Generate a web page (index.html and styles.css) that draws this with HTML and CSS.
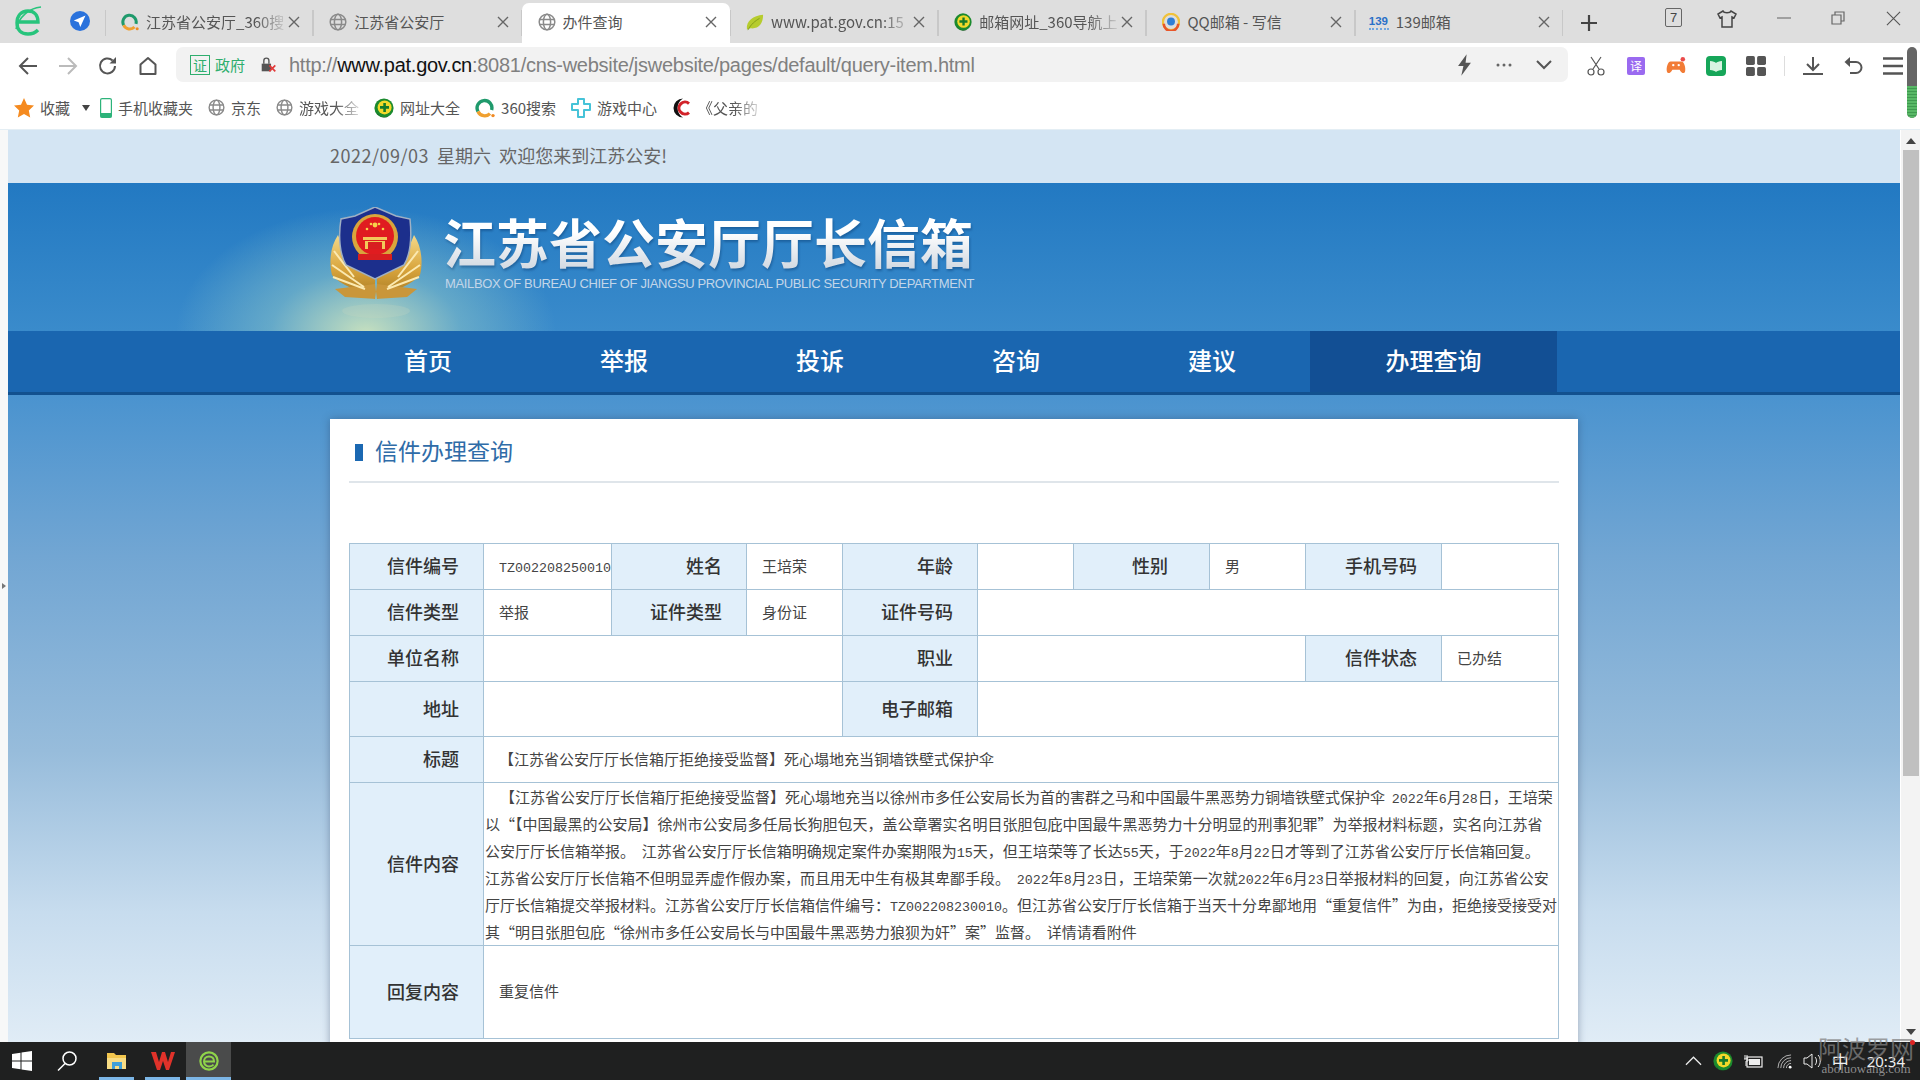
FILE: index.html
```html
<!DOCTYPE html>
<html lang="zh-CN">
<head>
<meta charset="utf-8">
<title>办件查询</title>
<link rel="stylesheet" href="styles.css">
</head>
<body>
<svg class="defs" width="0" height="0" aria-hidden="true">
  <defs>
    <symbol id="globe" viewBox="0 0 18 18"><g fill="none" stroke="#8a8a8a" stroke-width="1.5"><circle cx="9" cy="9" r="7.8"/><ellipse cx="9" cy="9" rx="3.6" ry="7.8"/><path d="M1.5 6.4h15M1.5 11.6h15"/></g></symbol>
    <symbol id="q360" viewBox="0 0 20 20"><path d="M3 13.5A7.4 7.4 0 1 1 16.6 12" fill="none" stroke="#1f9a6c" stroke-width="3.4"/><path d="M3 13.5A7.4 7.4 0 0 0 15 15.6" fill="none" stroke="#f0a030" stroke-width="3.4"/><circle cx="18" cy="17.6" r="1.7" fill="#f08a24"/></symbol>
    <symbol id="plus" viewBox="0 0 20 20"><circle cx="10" cy="10" r="9.6" fill="#1b8a2e"/><path d="M2 14A9.6 9.6 0 0 0 14 18.8 11 11 0 0 1 2 14Z" fill="#111"/><circle cx="10.6" cy="9.4" r="7" fill="#f2d92a"/><path d="M10.6 5v9M6 9.4h9" stroke="#167a2a" stroke-width="2.6"/></symbol>
    <symbol id="x" viewBox="0 0 12 12"><path d="M1 1l10 10M11 1L1 11" stroke="#666" stroke-width="1.4" fill="none"/></symbol>
  </defs>
</svg>

<header class="tabstrip">
  <div class="brand">
    <svg class="logo" viewBox="0 0 30 34"><path d="M4 17h20c0-7-4-11-10-11-7 0-11 5-11 12s4 11 11 11c5 0 8-2 10-4" fill="none" stroke="#27c47c" stroke-width="3.4"/><path d="M2 24C5 12 15 3 27 2" fill="none" stroke="#27c47c" stroke-width="1.6"/></svg>
    <svg class="send" viewBox="0 0 20 20"><circle cx="10" cy="10" r="10" fill="#2a72dc"/><path d="M15.5 4.5L3.8 9.6l4.8 1.6 1.7 4.9z" fill="#fff"/></svg>
  </div>
  <nav class="tabs">
    <div class="tab"><svg class="ico"><use href="#q360"/></svg><span class="tab-title fade">江苏省公安厅_360搜</span><svg class="tab-x"><use href="#x"/></svg></div>
    <div class="tab"><svg class="ico"><use href="#globe"/></svg><span class="tab-title">江苏省公安厅</span><svg class="tab-x"><use href="#x"/></svg></div>
    <div class="tab active"><svg class="ico"><use href="#globe"/></svg><span class="tab-title">办件查询</span><svg class="tab-x"><use href="#x"/></svg></div>
    <div class="tab"><svg class="ico" viewBox="0 0 20 20"><path d="M1 18C0 9 8 3 19 2c0 10-5 16-14 15z" fill="#b6cc2e"/><path d="M2 19C6 12 10 9 15 6" stroke="#7f9a18" fill="none"/></svg><span class="tab-title fade">www.pat.gov.cn:15</span><svg class="tab-x"><use href="#x"/></svg></div>
    <div class="tab"><svg class="ico"><use href="#plus"/></svg><span class="tab-title fade">邮箱网址_360导航上</span><svg class="tab-x"><use href="#x"/></svg></div>
    <div class="tab"><svg class="ico" viewBox="0 0 20 20"><circle cx="10" cy="10" r="9" fill="none" stroke="#f0c23a" stroke-width="2.6"/><path d="M2 12a8 8 0 0 0 16 0" fill="none" stroke="#e8562a" stroke-width="2.8"/><circle cx="10" cy="9.5" r="4.4" fill="#2f7fd6"/></svg><span class="tab-title">QQ邮箱 - 写信</span><svg class="tab-x"><use href="#x"/></svg></div>
    <div class="tab"><span class="ico-139">139</span><span class="tab-title">139邮箱</span><svg class="tab-x"><use href="#x"/></svg></div>
  </nav>
  <svg class="newtab" viewBox="0 0 16 16"><path d="M8 0v16M0 8h16" stroke="#444" stroke-width="2.2"/></svg>
  <div class="winctl">
    <span class="count">7</span>
    <svg class="wc shirt" viewBox="0 0 20 18"><path d="M6 1L1 4l2 4 2-1v10h10V7l2 1 2-4-5-3c-1 2.400-7 2.400-8 0z" fill="none" stroke="#444" stroke-width="1.5"/></svg>
    <svg class="wc min" viewBox="0 0 14 14"><path d="M0 7h14" stroke="#777" stroke-width="1.2"/></svg>
    <svg class="wc rest" viewBox="0 0 14 14"><path d="M1 4h9v9H1zM4 4V1h9v9h-3" fill="none" stroke="#666" stroke-width="1.2"/></svg>
    <svg class="wc cls" viewBox="0 0 16 16"><path d="M1 1l14 14M15 1L1 15" stroke="#555" stroke-width="1.2"/></svg>
  </div>
</header>

<div class="toolbar">
  <div class="tbtn"><svg viewBox="0 0 20 20"><path d="M19 10H2M10 2l-8 8 8 8" fill="none" stroke="#555" stroke-width="2"/></svg></div>
  <div class="tbtn"><svg viewBox="0 0 20 20"><path d="M1 10h17M10 2l8 8-8 8" fill="none" stroke="#bbb" stroke-width="2"/></svg></div>
  <div class="tbtn"><svg viewBox="0 0 20 20"><path d="M17 10a7.500 7.500 0 1 1-2.400-5.600" fill="none" stroke="#555" stroke-width="2"/><path d="M18 1v6.500h-6.500z" fill="#555"/></svg></div>
  <div class="tbtn"><svg viewBox="0 0 20 20"><path d="M2.500 18V8.500L10 2l7.500 6.500V18z" fill="none" stroke="#555" stroke-width="2" stroke-linejoin="round"/></svg></div>
  <div class="addr">
    <span class="cert">证</span><span class="gov">政府</span>
    <svg class="lock" viewBox="0 0 20 20"><path d="M2 9h11v9H2z" fill="#555"/><path d="M4.500 9V5.500a3 3 0 0 1 6 0V9" fill="none" stroke="#555" stroke-width="1.600"/><path d="M11 11l7 7M18 11l-7 7" stroke="#e23b3b" stroke-width="2"/></svg>
    <span class="url">http://<b>www.pat.gov.cn</b>:8081/cns-website/jswebsite/pages/default/query-item.html</span>
    <div class="addr-tools">
      <div class="abtn"><svg class="bolt" viewBox="0 0 14 20"><path d="M9 0L1 11h5l-2 9 9-12H8z" fill="#555"/></svg></div>
      <div class="abtn"><svg viewBox="0 0 16 4"><circle cx="2" cy="2" r="1.500" fill="#666"/><circle cx="8" cy="2" r="1.500" fill="#666"/><circle cx="14" cy="2" r="1.500" fill="#666"/></svg></div>
      <div class="abtn"><svg viewBox="0 0 16 10"><path d="M1 1l7 7 7-7" fill="none" stroke="#555" stroke-width="2"/></svg></div>
    </div>
  </div>
  <div class="tools">
    <div class="tbtn"><svg viewBox="0 0 20 20"><path d="M5 1l8 12M15 1L7 13" stroke="#555" stroke-width="1.200" fill="none"/><circle cx="5" cy="16" r="3" fill="none" stroke="#555" stroke-width="1.200"/><circle cx="15" cy="16" r="3" fill="none" stroke="#555" stroke-width="1.200"/></svg></div>
    <div class="tbtn"><span class="trans">译</span></div>
    <div class="tbtn"><svg viewBox="0 0 22 20"><path d="M5 5h12c3 0 5 7 4 11-1 3-4 2-6-2H7c-2 4-5 5-6 2C0 12 2 5 5 5z" fill="#f27c36"/><circle cx="8" cy="9" r="1.300" fill="#fff"/><circle cx="14" cy="9" r="1.300" fill="#fff"/><circle cx="18.500" cy="2.500" r="2.500" fill="#ea4a4a"/></svg></div>
    <div class="tbtn"><svg viewBox="0 0 20 20"><rect width="20" height="20" rx="4" fill="#16a659"/><path d="M4 5c3 0 5 1 6 2 1-1 3-2 6-2v9c-3 0-5 1-6 2-1-1-3-2-6-2z" fill="#d8f3e1"/></svg></div>
    <div class="tbtn"><svg viewBox="0 0 18 18"><rect width="8" height="8" rx="1.500" fill="#555"/><rect x="10" width="8" height="8" rx="1.500" fill="#555"/><rect y="10" width="8" height="8" rx="1.500" fill="#555"/><rect x="10" y="10" width="8" height="8" rx="1.500" fill="#555"/></svg></div>
    <i class="tool-sep"></i>
    <div class="tbtn"><svg viewBox="0 0 20 20"><path d="M10 1v12M4 8l6 6 6-6M0 18h20" fill="none" stroke="#555" stroke-width="2"/></svg></div>
    <div class="tbtn"><svg viewBox="0 0 20 20"><path d="M3 6h10a5 5 0 0 1 0 11H7" fill="none" stroke="#555" stroke-width="2"/><path d="M7 1L1.500 6 7 11z" fill="#555"/></svg></div>
    <div class="tbtn"><svg viewBox="0 0 16 16"><path d="M0 2h16M0 8h16M0 14h16" stroke="#555" stroke-width="2"/></svg></div>
  </div>
</div>

<div class="bookmarks">
  <div class="bm"><svg class="ico-b" viewBox="0 0 20 20"><path d="M10 0l3 6.800 7 .8-5.200 4.800 1.400 7.200L10 16l-6.200 3.600 1.400-7.200L0 7.600l7-.8z" fill="#f58a1f"/></svg><span>收藏</span></div>
  <span class="caret"></span>
  <div class="bm"><svg class="ico-p" viewBox="0 0 12 20"><rect x=".6" y=".6" width="10.800" height="18.800" rx="1.500" fill="#fff" stroke="#2db37a" stroke-width="1.200"/><rect x=".6" y="15" width="10.800" height="4.400" fill="#2db37a"/></svg><span>手机收藏夹</span></div>
  <div class="bm"><svg class="ico-g"><use href="#globe"/></svg><span>京东</span></div>
  <div class="bm"><svg class="ico-g"><use href="#globe"/></svg><span class="fade-b">游戏大全</span></div>
  <div class="bm"><svg class="ico-b"><use href="#plus"/></svg><span>网址大全</span></div>
  <div class="bm"><svg class="ico-b"><use href="#q360"/></svg><span>360搜索</span></div>
  <div class="bm"><svg class="ico-b" viewBox="0 0 20 20"><path d="M7 1h6v5h6v6h-6v7H7v-7H1V6h6z" fill="none" stroke="#46c3d8" stroke-width="2" stroke-linejoin="round"/></svg><span>游戏中心</span></div>
  <div class="bm"><svg class="ico-b" viewBox="0 0 20 20"><path d="M11 .5a9.500 9.500 0 1 0 0 19 11 11 0 0 1 0-19z" fill="#111"/><path d="M17 5.500a6 6 0 1 0 0 9" fill="none" stroke="#d2232a" stroke-width="3"/></svg><span class="fade-b">《父亲的</span></div>
  <div class="pill"><i></i></div>
</div>

<div class="viewport">
  <div class="gutter"><i></i></div>
  <main class="page">
    <div class="topline"><span class="date">2022/09/03</span><span>&nbsp;&nbsp;星期六&nbsp;&nbsp;欢迎您来到江苏公安!</span></div>
    <section class="banner">
      <svg class="emblem" viewBox="0 0 92 114">
        <defs>
          <linearGradient id="gold" x1="0" y1="0" x2="0" y2="1"><stop offset="0" stop-color="#f4d98a"/><stop offset=".55" stop-color="#d9a53c"/><stop offset="1" stop-color="#a87a24"/></linearGradient>
        </defs>
        <ellipse cx="46" cy="104" rx="34" ry="7" fill="#c9d9c0" opacity=".25"/>
        <path d="M8 28C0 40-1 56 2 68c8 10 26 16 43 22V62C28 60 14 46 8 28z" fill="url(#gold)"/>
        <path d="M84 28c8 12 9 28 6 40-8 10-26 16-43 22V62c17-2 31-16 37-34z" fill="url(#gold)"/>
        <path d="M5 82l40-5 2 15-32-2zM87 82l-40-5-2 15 32-2z" fill="#c9963a"/>
        <path d="M2 58l32 22M90 58L58 80M4 44l20 26M88 44L68 70M3 70l32 12M89 70L57 82" stroke="#fbe9b0" stroke-width="2" fill="none"/>
        <path d="M45 0l21 9 14 3c2 20 0 36-6 46L45 72 16 58C10 48 8 30 11 12l14-3z" fill="#1c2f8c" stroke="#9fb0c4" stroke-width="1.500"/>
        <circle cx="45" cy="30" r="23" fill="#d9a53c"/>
        <circle cx="45" cy="29" r="19" fill="#e01c20"/>
        <path d="M33 30h24v3H33zM35 34h20v8H35z" fill="#f2c95a"/>
        <path d="M38 35h14v7H38zM28 47h34v6H28z" fill="#d81e20"/>
        <circle cx="45" cy="18" r="2.400" fill="#f7d24a"/><circle cx="37" cy="22" r="1.300" fill="#f7d24a"/><circle cx="41" cy="17" r="1.300" fill="#f7d24a"/><circle cx="49" cy="17" r="1.300" fill="#f7d24a"/><circle cx="53" cy="22" r="1.300" fill="#f7d24a"/>
      </svg>
      <div class="banner-text">
        <h1>江苏省公安厅厅长信箱</h1>
        <p>MAILBOX OF BUREAU CHIEF OF JIANGSU PROVINCIAL PUBLIC SECURITY DEPARTMENT</p>
      </div>
    </section>
    <nav class="mainnav">
      <a>首页</a><a>举报</a><a>投诉</a><a>咨询</a><a>建议</a><a class="on">办理查询</a>
    </nav>
    <div class="wrap">
      <article class="card">
        <h2 class="card-title">信件办理查询</h2>
        <table class="info">
          <colgroup><col class="c1"><col class="c2"><col class="c3"><col class="c4"><col class="c5"><col class="c6"><col class="c7"><col class="c8"><col class="c9"><col class="c10"></colgroup>
          <tr class="r46"><th>信件编号</th><td class="tight-id"><span class="n">TZ002208250010</span></td><th>姓名</th><td>王培荣</td><th>年龄</th><td></td><th class="far">性别</th><td>男</td><th>手机号码</th><td></td></tr>
          <tr class="r46"><th>信件类型</th><td>举报</td><th>证件类型</th><td>身份证</td><th>证件号码</th><td colspan="5"></td></tr>
          <tr class="r46"><th>单位名称</th><td colspan="3"></td><th>职业</th><td colspan="3"></td><th>信件状态</th><td>已办结</td></tr>
          <tr class="r55"><th>地址</th><td colspan="3"></td><th>电子邮箱</th><td colspan="5"></td></tr>
          <tr class="r46"><th>标题</th><td colspan="9">【江苏省公安厅厅长信箱厅拒绝接受监督】死心塌地充当铜墙铁壁式保护伞</td></tr>
          <tr class="r163"><th>信件内容</th><td colspan="9" class="letter"><span class="first">【江苏省公安厅厅长信箱厅拒绝接受监督】死心塌地充当以徐州市多任公安局长为首的害群之马和中国最牛黑恶势力铜墙铁壁式保护伞&nbsp;&nbsp;<span class="n">2022</span>年<span class="n">6</span>月<span class="n">28</span>日，王培荣</span><br>以“【中国最黑的公安局】徐州市公安局多任局长狗胆包天，盖公章署实名明目张胆包庇中国最牛黑恶势力十分明显的刑事犯罪”为举报材料标题，实名向江苏省<br>公安厅厅长信箱举报。&nbsp;&nbsp;江苏省公安厅厅长信箱明确规定案件办案期限为<span class="n">15</span>天，但王培荣等了长达<span class="n">55</span>天，于<span class="n">2022</span>年<span class="n">8</span>月<span class="n">22</span>日才等到了江苏省公安厅厅长信箱回复。<br>江苏省公安厅厅长信箱不但明显弄虚作假办案，而且用无中生有极其卑鄙手段。&nbsp;&nbsp;<span class="n">2022</span>年<span class="n">8</span>月<span class="n">23</span>日，王培荣第一次就<span class="n">2022</span>年<span class="n">6</span>月<span class="n">23</span>日举报材料的回复，向江苏省公安<br>厅厅长信箱提交举报材料。江苏省公安厅厅长信箱信件编号：<span class="n">TZ002208230010</span>。但江苏省公安厅厅长信箱于当天十分卑鄙地用“重复信件”为由，拒绝接受接受对<br>其“明目张胆包庇“徐州市多任公安局长与中国最牛黑恶势力狼狈为奸”案”监督。&nbsp;&nbsp;详情请看附件</td></tr>
          <tr class="r93"><th>回复内容</th><td colspan="9">重复信件</td></tr>
        </table>
      </article>
    </div>
  </main>
  <aside class="scrollbar"><i class="up"></i><div class="thumb-track"><div class="thumb"></div></div><i class="down"></i></aside>
</div>

<footer class="taskbar">
  <div class="tb win"><svg viewBox="0 0 20 20"><path d="M0 3l8.500-1.200V9.500H0zM9.500 1.600L20 0v9.500H9.500zM0 10.500h8.500v7.700L0 17zM9.500 10.500H20V20L9.500 18.400z" fill="#fff"/></svg></div>
  <div class="tb search"><svg viewBox="0 0 20 20"><circle cx="12.500" cy="7.500" r="6.500" fill="none" stroke="#fff" stroke-width="1.500"/><path d="M8 12.500L1 19.500" stroke="#fff" stroke-width="1.500"/></svg></div>
  <div class="tb app folder"><svg viewBox="0 0 20 20"><path d="M0 2h7l2 2h10v14H0z" fill="#f2c64e"/><path d="M0 7h19v11H0z" fill="#f8dc84"/><path d="M5 11h10v7h-3v-3H8v3H5z" fill="#3f9fd8"/></svg></div>
  <div class="tb app wps"><svg viewBox="0 0 24 20"><path d="M0 1h5l3 10 3-10h3l3 10 3-10h4l-6 18h-3l-3-9-3 9H6z" fill="#e0322a"/></svg></div>
  <div class="tb app cur"><svg viewBox="0 0 22 22"><circle cx="11" cy="11" r="9.500" fill="none" stroke="#8fd44a" stroke-width="2.400"/><path d="M5.500 11.500h11c0-3.500-2-5.500-5.500-5.500s-5.500 2.500-5.500 5.500 2.500 5.500 5.500 5.500c2.500 0 4-1 5-2" fill="none" stroke="#8fd44a" stroke-width="2.200"/></svg></div>
  <div class="tray">
    <svg class="t-chev" viewBox="0 0 18 10"><path d="M1 9l8-8 8 8" fill="none" stroke="#eee" stroke-width="1.300"/></svg>
    <svg class="t-360"><use href="#plus"/></svg>
    <svg class="t-bat" viewBox="0 0 20 14"><rect x="4" y="3" width="15" height="10" fill="none" stroke="#eee" stroke-width="1.200"/><rect x="6" y="5" width="11" height="6" fill="#eee"/><path d="M2 1v4M4 1v4M1 5h4v2H3v5" stroke="#eee" fill="none"/></svg>
    <svg class="t-wifi" viewBox="0 0 16 16"><path d="M1 15A14 14 0 0 1 15 1M4 15A11 11 0 0 1 15 4M7 15a8 8 0 0 1 8-8M10 15a5 5 0 0 1 5-5" fill="none" stroke="#bbb"/><circle cx="14" cy="14" r="1.500" fill="#fff"/></svg>
    <svg class="t-vol" viewBox="0 0 20 16"><path d="M1 5h3l5-4v14l-5-4H1z" fill="none" stroke="#eee"/><path d="M12 4c2 2 2 6 0 8M15 2c3 3 3 9 0 12" fill="none" stroke="#eee"/></svg>
    <span class="t-ime">中</span>
    <span class="t-time">20:34</span>
  </div>
  <div class="watermark"><span class="wm-cn">阿波罗网</span><span class="wm-en">aboluowang.com</span><i></i></div>
</footer>
</body>
</html>
```
FILE: styles.css
```css
* { box-sizing: border-box; }
html, body { margin: 0; height: 100%; }
body {
  width: 1920px; height: 1080px; overflow: hidden;
  display: flex; flex-direction: column;
  font-family: "Noto Sans CJK SC", "Noto Sans", sans-serif;
  background: #fff; color: #333;
}
.defs { display: block; height: 0; }

/* tab strip */
.tabstrip { height: 43px; flex: none; background: #dedede; display: flex; align-items: flex-end; }
.brand { width: 105px; height: 43px; flex: none; display: flex; align-items: center; padding-left: 14px; }
.logo { width: 30px; height: 34px; flex: none; }
.send { width: 20px; height: 20px; margin-left: 26px; margin-bottom: 2px; flex: none; }
.tabs { display: flex; height: 40px; flex: none; }
.tab {
  width: 208.3px; height: 40px; flex: none; display: flex; align-items: center;
  padding: 0 13px 2px 16px; font-size: 15px; color: #555;
  background: linear-gradient(#c8c8c8, #c8c8c8) right 7px / 1px 26px no-repeat, linear-gradient(#c8c8c8, #c8c8c8) left 7px / 1px 26px no-repeat;
}
.tab.active { background: #fff; border-radius: 7px 7px 0 0; }
.ico { width: 18px; height: 18px; flex: none; }
.ico-139 { width: 20px; flex: none; margin-left: -2px; font: 700 11.5px/14px "Liberation Sans", sans-serif; color: #2a70c8; border-bottom: 2px dotted #6fa6e0; }
.tab-title { flex: 1; margin-left: 7px; white-space: nowrap; overflow: hidden; min-width: 0; line-height: 22px; }
.fade { flex: none; width: 140px; -webkit-mask-image: linear-gradient(90deg, #000 78%, rgba(0,0,0,.1)); mask-image: linear-gradient(90deg, #000 78%, rgba(0,0,0,.1)); }
.tab-x { width: 12px; height: 12px; flex: none; margin-left: auto; }
.newtab { width: 16px; height: 16px; margin: 0 0 12px 18px; flex: none; }
.winctl { display: flex; align-items: center; height: 43px; margin-left: 68px; flex: none; }
.count { width: 17px; height: 19px; border: 1px solid #666; border-radius: 2px; font: 13px/17px "Liberation Sans", sans-serif; text-align: center; color: #444; margin-top: -8px; }
.wc { flex: none; margin-top: -7px; }
.shirt { width: 20px; height: 18px; margin-left: 35px; margin-top: -5px; }
.min { width: 14px; height: 14px; margin-left: 40px; }
.rest { width: 14px; height: 14px; margin-left: 40px; }
.cls { width: 15px; height: 15px; margin-left: 41px; }

/* toolbar */
.toolbar { height: 45px; flex: none; display: flex; align-items: center; padding-left: 8px; background: #fff; }
.tbtn { width: 40px; height: 40px; flex: none; display: flex; align-items: center; justify-content: center; }
.tbtn svg { width: 20px; height: 20px; }
.addr {
  width: 1392px; height: 35px; margin: -2px 0 0 8px; flex: none; display: flex; align-items: center;
  padding-left: 14px; background: #f2f2f2; border-radius: 7px;
}
.cert { width: 20px; height: 20px; border: 1px solid #2fae6e; color: #2fae6e; font-size: 14px; line-height: 18px; text-align: center; flex: none; }
.gov { margin-left: 5px; font-size: 15px; color: #2fae6e; flex: none; }
.lock { width: 17px; height: 17px; margin-left: 15px; flex: none; }
.url { margin-left: 12px; font: 20px/26px "Liberation Sans", sans-serif; color: #808080; white-space: nowrap; letter-spacing: -.27px; }
.url b { font-weight: 400; color: #111; }
.addr-tools { margin-left: auto; display: flex; padding-right: 4px; }
.abtn { width: 40px; height: 30px; display: flex; align-items: center; justify-content: center; }
.abtn svg { width: 16px; height: 16px; }
.abtn svg.bolt { width: 15px; height: 22px; }
.tools { display: flex; align-items: center; margin-left: 8px; flex: none; }
.tool-sep { width: 1px; height: 20px; background: #ddd; margin: 0 8px; flex: none; }
.trans { width: 18px; height: 18px; background: #9a6af0; color: #fff; font-size: 12px; line-height: 18px; text-align: center; border-radius: 2px; }

/* bookmarks */
.bookmarks { height: 42px; flex: none; position: relative; display: flex; align-items: center; gap: 15px; padding: 0 0 2px 14px; font-size: 15px; color: #555; border-bottom: 1px solid #e4eef4; }
.bm { display: flex; align-items: center; gap: 6px; }
.bm span { white-space: nowrap; line-height: 20px; }
.ico-b { width: 20px; height: 20px; flex: none; }
.ico-g { width: 17px; height: 17px; flex: none; }
.ico-p { width: 12px; height: 20px; flex: none; }
.caret { width: 0; height: 0; border: 4px solid transparent; border-top: 6px solid #444; border-bottom: 0; margin-left: -3px; margin-right: -5px; }
.fade-b { -webkit-mask-image: linear-gradient(90deg, #000 60%, rgba(0,0,0,.25)); mask-image: linear-gradient(90deg, #000 60%, rgba(0,0,0,.25)); }
.pill { position: absolute; right: 3px; top: -41px; width: 10px; height: 71px; background: #666; border-radius: 5px; overflow: hidden; display: flex; align-items: flex-end; }
.pill i { display: block; width: 100%; height: 32px; background: repeating-linear-gradient(#58b866 0 2px, #3f9a50 2px 3px); }

/* viewport */
.viewport { flex: 1; min-height: 0; display: flex; overflow: hidden; }
.gutter { width: 8px; flex: none; background: #f7f8f8; display: flex; align-items: center; padding-left: 2px; }
.gutter i { display: block; border: 3px solid transparent; border-left: 4px solid #777; border-right: 0; }
.page { flex: 1; min-width: 0; display: flex; flex-direction: column; overflow: hidden; }
.topline { height: 53px; flex: none; background: #d4e5f3; padding: 0 0 3px 322px; display: flex; align-items: center; font-size: 18px; color: #666; white-space: nowrap; }
.date { letter-spacing: .5px; }
.banner {
  height: 148px; flex: none; padding: 24px 0 0 322px; display: flex; align-items: flex-start;
  background:
    radial-gradient(ellipse 190px 125px at 358px 150px, rgba(205,228,190,.95), rgba(130,190,200,.6) 50%, rgba(60,140,200,0) 100%),
    linear-gradient(#2279c2, #3a8bcb);
}
.emblem { width: 92px; height: 114px; flex: none; }
.banner-text { margin: 4px 0 0 21px; width: 540px; }
.banner-text h1 {
  margin: 0; font-size: 53px; line-height: 60px; font-weight: 700; white-space: nowrap;
  background: linear-gradient(#fff 35%, #cfd7e0); -webkit-background-clip: text; background-clip: text; color: transparent;
  filter: drop-shadow(1px 2px 1px rgba(0,40,90,.35));
}
.banner-text p { margin: 5px 0 0 2px; font: 13px/15px "Liberation Sans", sans-serif; color: #c3d6e8; white-space: nowrap; letter-spacing: -.36px; }
.mainnav { height: 64px; flex: none; padding-left: 322px; display: flex; background: #1a66b0; border-bottom: 3px solid #12518f; }
.mainnav a { width: 196px; font-size: 24px; font-weight: 500; line-height: 58px; text-align: center; color: #fff; }
.mainnav a.on { width: 247px; background: #124f94; }

.wrap { flex: 1; min-height: 0; padding: 24px 0 0 322px; background: linear-gradient(#4a93cf, #72a6d3 25%, #97bcdb 55%, #c7dcee 80%, #e0ecf6); }
.card { width: 1248px; padding: 0 19px 40px; background: #fff; box-shadow: 0 0 8px rgba(40,60,90,.4); }
.card-title {
  margin: 0 0 60px; height: 64px; border-bottom: 2px solid #dfe5ea; padding-left: 26px;
  font-size: 23px; font-weight: 400; line-height: 62px; color: #2f6ca8;
  background: linear-gradient(#1b68b2, #1b68b2) 6px 25px / 8px 17px no-repeat;
}
.info { width: 1209px; table-layout: fixed; border-collapse: collapse; font-size: 15px; }
.c1 { width: 134px; } .c2 { width: 128px; } .c3 { width: 135px; } .c4 { width: 96px; } .c5 { width: 135px; }
.c6 { width: 96px; } .c7 { width: 136px; } .c8 { width: 96px; } .c9 { width: 136px; } .c10 { width: 117px; }
.info th, .info td { border: 1px solid #a6c2d6; padding: 0 0 3px; }
.info th { background: #e1effa; font-size: 18px; font-weight: 500; text-align: right; padding-right: 24px; color: #333; }
.info th.far { padding-right: 41px; }
.info td { padding-left: 15px; color: #444; white-space: nowrap; }
.info td.tight-id { overflow: hidden; }
.r46 { height: 46px; } .r55 { height: 55px; } .r163 { height: 163px; } .r93 { height: 93px; }
.n { font-family: "Liberation Mono", monospace; font-size: 13.33px; line-height: 0; }
.info td.letter { padding: 0 0 0 1px; line-height: 27px; vertical-align: top; }
.first { padding-left: 15px; }

/* scrollbar */
.scrollbar { width: 20px; flex: none; background: #f3f3f3; display: flex; flex-direction: column; align-items: center; padding: 8px 0 7px; border-left: 1px solid #fff; }
.thumb-track { flex: 1; width: 100%; padding: 6px 1px 0 2px; }
.thumb { height: 626px; background: #c0c0c0; }
.up, .down { display: block; border: 5px solid transparent; flex: none; }
.up { border-bottom: 6px solid #444; border-top: 0; }
.down { border-top: 6px solid #444; border-bottom: 0; }

/* taskbar */
.taskbar { height: 38px; flex: none; position: relative; display: flex; align-items: stretch; background: #1f2020; }
.tb { display: flex; align-items: center; justify-content: center; flex: none; }
.tb svg { width: 20px; height: 20px; }
.win { width: 44px; }
.search { width: 46px; }
.app { border-bottom: 3px solid #7cb6e6; padding-top: 2px; }
.folder { width: 35px; margin-left: 9px; }
.wps { width: 35px; margin-left: 11px; }
.wps svg { width: 24px; }
.cur { width: 45px; margin-left: 6px; background: #4a4b4b; }
.tray { margin-left: auto; display: flex; align-items: center; padding-right: 15px; color: #f0f0f0; }
.t-chev { width: 17px; height: 10px; }
.t-360 { width: 20px; height: 20px; margin-left: 11px; }
.t-bat { width: 20px; height: 14px; margin-left: 10px; }
.t-wifi { width: 15px; height: 15px; margin-left: 14px; }
.t-vol { width: 20px; height: 16px; margin-left: 11px; }
.t-ime { font-size: 17px; margin-left: 9px; width: 18px; line-height: 20px; }
.t-time { font: 15px/20px "Noto Sans", sans-serif; margin-left: 17px; }
.watermark { position: absolute; right: 5px; top: -7px; width: 98px; display: flex; flex-direction: column; align-items: center; color: rgba(130,130,130,.75); }
.wm-cn { font-size: 24px; line-height: 25px; letter-spacing: 0; white-space: nowrap; }
.wm-en { font: 13px/12px "Liberation Serif", serif; margin-top: 3px; color: rgba(170,170,170,.8); }
.watermark i { position: absolute; right: 0; top: 5px; width: 5px; height: 5px; border-radius: 50%; background: #d22; }
```
